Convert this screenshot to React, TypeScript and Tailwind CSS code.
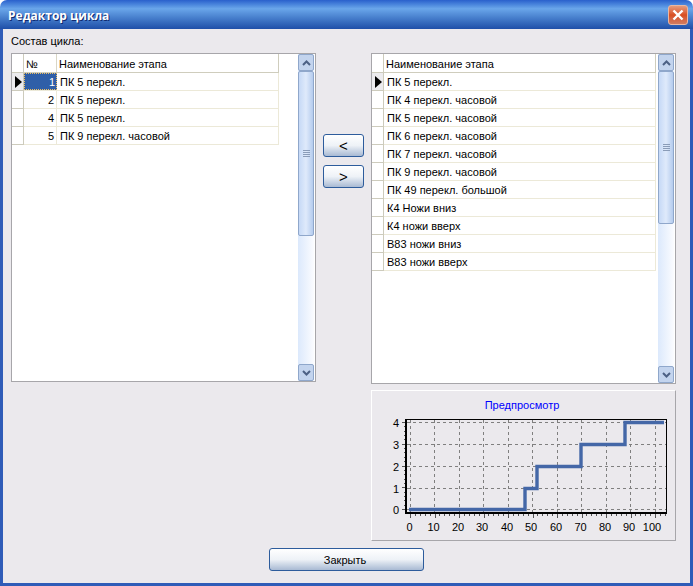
const leftRows = [
  { num: 1, name: "ПК 5 перекл." },
  { num: 2, name: "ПК 5 перекл." },
  { num: 4, name: "ПК 5 перекл." },
  { num: 5, name: "ПК 9 перекл. часовой" },
]

const rightRows = [
  "ПК 5 перекл.",
  "ПК 4 перекл. часовой",
  "ПК 5 перекл. часовой",
  "ПК 6 перекл. часовой",
  "ПК 7 перекл. часовой",
  "ПК 9 перекл. часовой",
  "ПК 49 перекл. большой",
  "К4 Ножи вниз",
  "К4 ножи вверх",
  "В83 ножи вниз",
  "В83 ножи вверх",
]

const Pointer = ({ on }: { on: boolean }) => (
  <div className={`w-[12px] h-[calc(100%+1px)] shrink-0 flex items-center justify-center pl-[2px] border-r border-b border-[#cdcbbc] ${on ? "bg-[#ecebee]" : "bg-white"}`}>
    {on && (
      <svg width="7" height="12" viewBox="0 0 7 12">
        <path d="M0 0 L7 6 L0 12 Z" fill="#000" />
      </svg>
    )}
  </div>
)

const Scrollbar = ({ thumb }: { thumb: number }) => (
  <div className="w-[16px] h-full flex flex-col shrink-0 bg-gradient-to-r from-[#dce9fc] to-[#fbfcff]">
    <div className="h-[17px] shrink-0 rounded-[2px] border border-[#8fa7cb] bg-[#c3d4ee] flex items-center justify-center">
      <svg width="9" height="6" viewBox="0 0 9 6">
        <path d="M1 5 L4.5 1.5 L8 5" fill="none" stroke="#4d6185" strokeWidth="2" />
      </svg>
    </div>
    <div
      className="shrink-0 rounded-[2px] border border-[#8fa7cb] bg-gradient-to-r from-[#c6d9f6] via-[#dfeafb] to-[#b5ccee] flex flex-col items-center justify-center gap-[1px]"
      style={{ height: thumb }}
    >
      <div className="w-[7px] h-[1px] bg-[#8a9cb8]" />
      <div className="w-[7px] h-[1px] bg-[#8a9cb8]" />
      <div className="w-[7px] h-[1px] bg-[#8a9cb8]" />
      <div className="w-[7px] h-[1px] bg-[#8a9cb8]" />
    </div>
    <div className="flex-1" />
    <div className="h-[17px] shrink-0 rounded-[2px] border border-[#8fa7cb] bg-[#c3d4ee] flex items-center justify-center">
      <svg width="9" height="6" viewBox="0 0 9 6">
        <path d="M1 1 L4.5 4.5 L8 1" fill="none" stroke="#4d6185" strokeWidth="2" />
      </svg>
    </div>
  </div>
)

const XpButton = ({ label, className }: { label: string; className: string }) => (
  <button className={`rounded-[3px] border border-[#2d5c9c] bg-gradient-to-b from-[#ffffff] via-[#eef2f7] to-[#a9bad3] text-black ${className}`}>
    {label}
  </button>
)

const xGrid = [410.5, 434.5, 459.5, 483.5, 508.5, 532.5, 557.5, 581.5, 606.5, 630.5, 655.5]
const yGrid = [422.5, 444.5, 466.5, 488.5, 509.5]
const xLabels = [409.5, 433.5, 458, 482, 507, 531, 556, 580.5, 605, 629, 652]

const Chart = () => (
  <svg width="303" height="126" viewBox="372 412 303 126" className="block" style={{ fontFamily: "'Liberation Sans', sans-serif" }}>
    {xGrid.map((x) => (
      <line key={x} x1={x} x2={x} y1={420} y2={512} stroke="#7f7f7f" strokeDasharray="3 3" />
    ))}
    {yGrid.map((y) => (
      <line key={y} x1={407} x2={666} y1={y} y2={y} stroke="#7f7f7f" strokeDasharray="3 3" />
    ))}
    {Array.from({ length: 53 }).map((_, i) => {
      const x = Math.round(410 + i * 4.9) + 0.5
      return <line key={i} x1={x} x2={x} y1={514} y2={i % 5 === 0 ? 518 : 516} stroke="#555" />
    })}
    {Array.from({ length: 21 }).map((_, i) => {
      const y = Math.round(422 + i * 4.35) + 0.5
      return <line key={i} x1={i % 5 === 0 ? 402 : 404} x2={405} y1={y} y2={y} stroke="#555" />
    })}
    <rect x="406.5" y="419.5" width="260" height="93" fill="none" stroke="#000" />
    <line x1="406" x2="406" y1="419" y2="514" stroke="#000" strokeWidth="2" />
    <line x1="405" x2="667" y1="513" y2="513" stroke="#000" strokeWidth="2" />
    <path
      d="M409 509.5 H525 V488.5 H537 V466.5 H581 V444.5 H625 V422.5 H664"
      fill="none"
      stroke="#4467a7"
      strokeWidth="3.4"
    />
    {[4, 3, 2, 1, 0].map((v, i) => (
      <text key={v} x="399" y={yGrid[i] + 4.5} textAnchor="end" fontSize="11" fill="#000">
        {v}
      </text>
    ))}
    {xLabels.map((x, i) => (
      <text key={x} x={x} y="531" textAnchor="middle" fontSize="11" fill="#000">
        {i * 10}
      </text>
    ))}
  </svg>
)

const App = () => {
  return (
    <div className="w-[693px] h-[586px] flex flex-col bg-white overflow-hidden text-[11px] text-black font-['Liberation_Sans',sans-serif]">
      <div className="h-[29px] shrink-0 rounded-t-[7px] bg-gradient-to-b from-[#2a60cc] via-[#6aa6ea] via-30% to-[#1f4fa8] flex items-center justify-between pl-[8px] pr-[5px]">
        <span className="pt-[3px] text-[12px] font-bold text-white font-['Open_Sans',sans-serif] [text-shadow:1px_1px_#0f2a70]">Редактор цикла</span>
        <div className="w-[20px] h-[20px] rounded-[3px] border border-[#e9b7a2] bg-gradient-to-b from-[#e39a7c] via-[#d94e20] to-[#cf7b60] flex items-center justify-center">
          <svg width="12" height="12" viewBox="0 0 12 12">
            <path d="M1.5 1.5 L10.5 10.5 M10.5 1.5 L1.5 10.5" stroke="#fff" strokeWidth="2.4" />
          </svg>
        </div>
      </div>

      <div className="flex-1 min-h-0 flex flex-col border-x-[3px] border-b-[3px] border-[#2f5cb8] bg-[#ebe9ed] pl-[8px] pr-[14px]">
        <div className="h-[24px] leading-[24px]">Состав цикла:</div>

        <div className="flex">
          <div className="w-[305px] h-[329px] border border-[#a7a6aa] bg-white flex pr-[1px]">
            <div className="flex-1 min-w-0 flex flex-col">
              <div className="w-[267px] h-[19px] flex items-stretch border-b border-r border-[#cfcdbd]">
                <Pointer on={false} />
                <div className="w-[33px] pl-[2px] leading-[20px] border-r border-[#d9d6c6]">№</div>
                <div className="flex-1 pl-[2px] leading-[20px]">Наименование этапа</div>
              </div>
              {leftRows.map((row, i) => (
                <div key={row.num} className="w-[267px] h-[18px] flex items-stretch border-b border-r border-[#ece9d8]">
                  <Pointer on={i === 0} />
                  <div
                    className={
                      i === 0
                        ? "w-[33px] text-right pr-[1px] leading-[17px] bg-[#2f5fa8] text-white border border-dotted border-[#f0c060]"
                        : "w-[33px] text-right pr-[2px] leading-[19px] border-r border-[#ece9d8]"
                    }
                  >
                    {row.num}
                  </div>
                  <div className="flex-1 pl-[3px] leading-[19px]">{row.name}</div>
                </div>
              ))}
            </div>
            <Scrollbar thumb={165} />
          </div>

          <div className="w-[55px] shrink-0 flex flex-col items-center gap-[8px] pt-[81px]">
            <XpButton label="<" className="w-[41px] h-[23px] text-[15px]" />
            <XpButton label=">" className="w-[41px] h-[23px] text-[15px]" />
          </div>

          <div className="w-[305px] flex flex-col">
            <div className="h-[331px] border border-[#a7a6aa] bg-white flex pr-[1px]">
              <div className="flex-1 min-w-0 flex flex-col">
                <div className="w-[284px] h-[19px] flex items-stretch border-b border-r border-[#cfcdbd]">
                  <Pointer on={false} />
                  <div className="flex-1 pl-[2px] leading-[20px]">Наименование этапа</div>
                </div>
                {rightRows.map((name, i) => (
                  <div key={name} className="w-[284px] h-[18px] flex items-stretch border-b border-r border-[#ece9d8]">
                    <Pointer on={i === 0} />
                    <div className="flex-1 pl-[3px] leading-[19px]">{name}</div>
                  </div>
                ))}
              </div>
              <Scrollbar thumb={153} />
            </div>

            <div className="mt-[6px] h-[151px] border border-t-white border-l-white border-r-[#a7a6aa] border-b-[#a7a6aa]">
              <div className="h-[21px] pt-[8px] pr-[3px] leading-[13px] text-center text-[#0000ff]">Предпросмотр</div>
              <Chart />
            </div>
          </div>
        </div>

        <div className="flex justify-center mt-[7px] pl-[6px]">
          <XpButton label="Закрыть" className="w-[155px] h-[23px] text-[11px] pr-[3px] pt-[1px]" />
        </div>
      </div>
    </div>
  )
}

export default App
